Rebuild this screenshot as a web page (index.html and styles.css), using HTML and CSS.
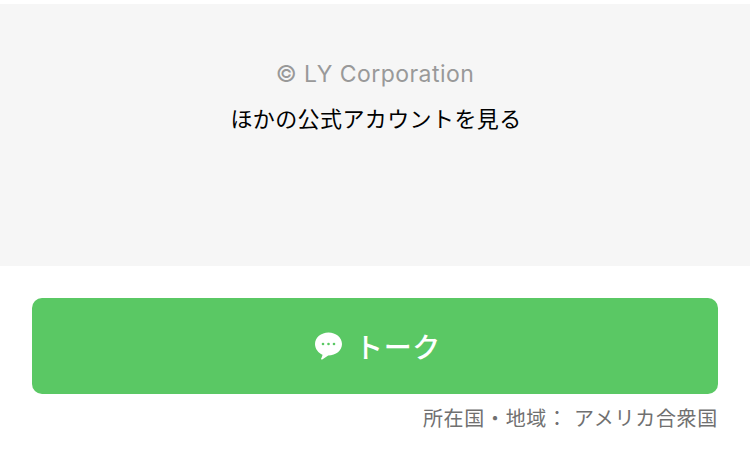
FILE: index.html
```html
<!DOCTYPE html>
<html lang="ja">
	<head>
		<meta charset="utf-8">
		<title>トーク</title>
		<link rel="stylesheet" href="styles.css">
	</head>
	<body>
		<div class="footer_info">
			<p class="copyright">© LY Corporation</p>
			<a class="other_link" href="#">ほかの公式アカウントを見る</a>
		</div>
		<div class="talk_area">
			<a class="talk_btn" href="#">
				<svg class="talk_icon" width="28" height="28" viewBox="0 0 28 28">
					<path d="M14.500 .5C7 .5 1 5.500 1 12C1 17 4.500 21 8.500 22.700C8.300 24.500 7.600 25.800 7 27C7 27.600 8 27.600 9 26.900L14.200 23.500C22 23.500 28 18.500 28 12C28 5.500 22 .5 14.500 .5Z" fill="#fff"/>
					<circle cx="9" cy="12" r="1.300" fill="#5ac864"/>
					<circle cx="14.500" cy="12" r="1.300" fill="#5ac864"/>
					<circle cx="20" cy="12" r="1.300" fill="#5ac864"/>
				</svg>
				<span>トーク</span>
			</a>
			<p class="region">所在国・地域： アメリカ合衆国</p>
		</div>
	</body>
</html>
```

FILE: styles.css
```css
body {
	margin: 0;
	height: 454px;
	overflow: hidden;
	background-color: #fff;
	font-family: "Inter", "Noto Sans CJK JP", sans-serif;
}

.footer_info {
	display: flex;
	flex-direction: column;
	align-items: center;
	margin-top: 4px;
	height: 262px;
	padding-top: 55px;
	box-sizing: border-box;
	background-color: #f6f6f6;
}

.copyright {
	margin: 0;
	font-size: 23px;
	letter-spacing: 0.45px;
	line-height: 30px;
	color: #999;
}

.other_link {
	margin-top: 15px;
	padding-left: 2px;
	font-size: 22px;
	letter-spacing: 0.4px;
	line-height: 30px;
	color: #000;
	text-decoration: none;
}

.talk_area {
	display: flex;
	flex-direction: column;
	padding: 32px 32px 0;
}

.talk_btn {
	display: flex;
	align-items: center;
	justify-content: center;
	gap: 13px;
	height: 96px;
	padding-left: 5px;
	border-radius: 10px;
	background-color: #5ac864;
	color: #fff;
	font-size: 28px;
	font-weight: 500;
	letter-spacing: 0.7px;
	text-decoration: none;
}

.talk_icon {
	display: block;
}

.region {
	margin: 10px 0 0;
	text-align: right;
	font-size: 20px;
	letter-spacing: 0.7px;
	line-height: 30px;
	color: #707070;
}
```
